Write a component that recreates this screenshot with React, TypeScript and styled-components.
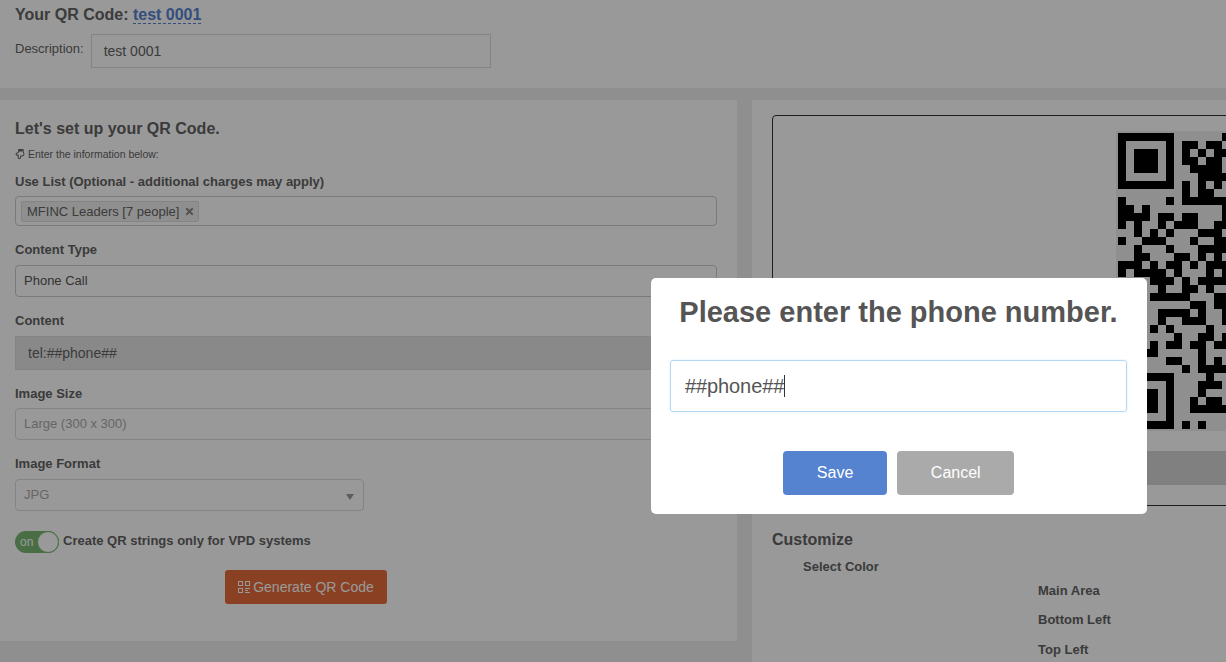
import React from "react";
import styled, { createGlobalStyle } from "styled-components";
import { FaRegHandPointDown, FaTimes } from "react-icons/fa";

const GlobalStyle = createGlobalStyle`
    html, body {
        margin: 0;
        padding: 0;
        height: 100%;
        overflow: hidden;
        background: #eeeeee;
    }
    body {
        font-family: "Liberation Sans", Arial, sans-serif;
        color: #636363;
    }
    * {
        box-sizing: border-box;
    }
`;

const Page = styled.div`
    width: 1226px;
    height: 662px;
    overflow: hidden;
    background: #eeeeee;
`;

const TopPanel = styled.section`
    height: 88px;
    padding: 6px 15px 0;
    background: #fff;
`;

const PageTitle = styled.h2`
    margin: 0 0 10px;
    font-size: 16px;
    line-height: 18px;
    font-weight: bold;
`;

const TitleLink = styled.a`
    color: #5583d0;
    border-bottom: 1px dashed #5583d0;
`;

const DescriptionRow = styled.div`
    display: flex;
    gap: 7px;
    align-items: flex-start;
`;

const DescriptionLabel = styled.label`
    font-size: 13px;
    line-height: 30px;
`;

const DescriptionInput = styled.div`
    width: 400px;
    height: 34px;
    padding: 0 12px;
    border: 1px solid #ddd;
    font-size: 14px;
    line-height: 32px;
`;

const Columns = styled.div`
    display: flex;
    gap: 15px;
    margin-top: 12px;
    width: 1800px;
`;

const FormPanel = styled.section`
    flex: none;
    width: 737px;
    height: 541px;
    padding: 19px 20px 0 15px;
    background: #fff;
`;

const FormTitle = styled.h3`
    margin: 0;
    font-size: 16px;
    line-height: 20px;
    font-weight: bold;
`;

const Hint = styled.p`
    display: flex;
    align-items: center;
    gap: 3px;
    margin: 8px 0 0;
    font-size: 10.5px;
    line-height: 14px;
`;

const FieldLabel = styled.label<{ $top?: number; $gap?: number }>`
    display: block;
    margin-top: ${({ $top }) => $top ?? 16}px;
    margin-bottom: ${({ $gap }) => $gap ?? 7}px;
    font-size: 13px;
    line-height: 16px;
    font-weight: bold;
`;

const TagBox = styled.div`
    display: flex;
    align-items: center;
    height: 30px;
    padding: 0 5px;
    border: 1px solid #ccc;
    border-radius: 4px;
`;

const Tag = styled.span`
    display: flex;
    align-items: center;
    gap: 5px;
    height: 21px;
    padding: 0 3px 0 5px;
    background: #eee;
    border: 1px solid #ddd;
    border-radius: 2px;
    font-size: 13px;
`;

const SelectBox = styled.div<{ $disabled?: boolean; $width?: number }>`
    position: relative;
    display: flex;
    align-items: center;
    width: ${({ $width }) => ($width ? `${$width}px` : "100%")};
    height: 32px;
    padding: 0 8px 2px;
    border: 1px solid ${({ $disabled }) => ($disabled ? "#ddd" : "#ccc")};
    border-radius: 4px;
    font-size: 13px;
    color: ${({ $disabled }) => ($disabled ? "#aaa" : "#555")};
`;

const SelectArrow = styled.span`
    position: absolute;
    right: 9px;
    top: 14px;
    border-style: solid;
    border-width: 6px 4px 0;
    border-color: #999 transparent transparent;
`;

const ReadOnlyInput = styled.div`
    height: 34px;
    padding: 0 12px;
    background: #e5e5e5;
    border: 1px solid #ddd;
    font-size: 14px;
    line-height: 32px;
`;

const SwitchRow = styled.div`
    display: flex;
    align-items: flex-start;
    gap: 4px;
    margin-top: 20px;
    font-size: 13px;
    line-height: 19px;
    font-weight: bold;
`;

const Switch = styled.span`
    position: relative;
    display: block;
    width: 44px;
    height: 22px;
    padding-left: 5px;
    background: #7ab872;
    border-radius: 11px;
    color: #fff;
    font-size: 12px;
    font-weight: normal;
    line-height: 23px;
`;

const SwitchKnob = styled.span`
    position: absolute;
    right: 0;
    top: 0;
    width: 22px;
    height: 22px;
    background: #fff;
    border: 1px solid #7ab872;
    border-radius: 50%;
`;

const GenerateRow = styled.div`
    display: flex;
    justify-content: center;
    margin-top: 17px;
    padding-right: 120px;
`;

const GenerateButton = styled.button`
    display: flex;
    align-items: center;
    gap: 3px;
    height: 34px;
    padding: 0 13px;
    background: #e66b3a;
    border: none;
    border-radius: 3px;
    color: #fff;
    font-family: inherit;
    font-size: 14px;
`;

const PreviewPanel = styled.section`
    flex: none;
    width: 1028px;
    height: 600px;
    padding: 15px 20px 0;
    background: #fff;
`;

const PreviewFrame = styled.div`
    display: flex;
    flex-direction: column;
    align-items: center;
    height: 391px;
    padding-top: 15px;
    border: 1px solid #333;
    border-radius: 4px;
`;

const QrImage = styled.svg`
    display: block;
    flex: none;
    width: 300px;
    height: 300px;
    background: #eee;
`;

const DownloadBar = styled.div`
    flex: none;
    width: 300px;
    height: 34px;
    margin-top: 20px;
    background: #d5d5d5;
`;

const CustomizeTitle = styled.h3`
    margin: 24px 0 0;
    font-size: 16px;
    line-height: 20px;
    font-weight: bold;
`;

const SelectColor = styled.div`
    margin: 9px 0 0 31px;
    font-size: 13px;
    line-height: 16px;
    font-weight: bold;
`;

const ColorList = styled.div`
    display: flex;
    flex-direction: column;
    gap: 13.4px;
    margin: 8px 0 0 266px;
    font-size: 13px;
    line-height: 16px;
    font-weight: bold;
`;

const Overlay = styled.div`
    position: fixed;
    inset: 0;
    padding: 278px 0 0 651px;
    background: rgba(0, 0, 0, 0.4);
`;

const Modal = styled.div`
    width: 496px;
    height: 236px;
    padding: 17px 20px 0 19px;
    background: #fff;
    border-radius: 5px;
`;

const ModalTitle = styled.h2`
    margin: 0;
    font-size: 29px;
    line-height: 34px;
    font-weight: bold;
    text-align: center;
    white-space: nowrap;
    color: #555;
`;

const ModalField = styled.div`
    display: flex;
    align-items: center;
    height: 52px;
    margin-top: 31px;
    padding: 0 14px;
    border: 1px solid #b3d9f5;
    border-radius: 3px;
    box-shadow: 0 0 2px rgba(120, 185, 235, 0.35);
    font-size: 20px;
    letter-spacing: -0.1px;
    color: #555;
`;

const Caret = styled.span`
    width: 1px;
    height: 22px;
    background: #333;
`;

const ModalActions = styled.div`
    display: flex;
    justify-content: center;
    gap: 10px;
    margin-top: 39px;
`;

const ModalButton = styled.button<{ $primary?: boolean }>`
    height: 44px;
    padding: 0 ${({ $primary }) => ($primary ? "34px" : "33.5px")};
    background: ${({ $primary }) => ($primary ? "#5583d0" : "#aaaaaa")};
    border: none;
    border-radius: 4px;
    color: #fff;
    font-family: inherit;
    font-size: 16px;
`;

// left part of the code, the rest of it is cut by the window edge
const qrRows = [
    "#######......#",
    "#.....#.##.##.",
    "#.###.#.#.#.##",
    "#.###.#.##.##.",
    "#.###.#..####.",
    "#.....#...####",
    "#######.#.#.#.",
    "........#.##..",
    "#.....#.######",
    "##.#.........#",
    "####.##.##...#",
    "#.#..#.###..##",
    "..#.#.#...###.",
    "#..###...#..##",
    "..#...#...####",
    "..##...##.#.#.",
    "###.#.##.#.###",
    "#.####.#...#.#",
    "....###.#.####",
    ".....#..##.#..",
    "....#####...##",
    ".........##.##",
    ".....####.#..#",
    ".....#..###..#",
    "....#.#....#..",
    ".......#..##.#",
    "....#.##.##.##",
    "...##.....#...",
    "......##..#.#.",
    "........#.####",
    "#######....#..",
    "#.....#...###.",
    "#.###.#...#...",
    "#.###.#..#.##.",
    "#.###.#..#####",
    "#.....#.......",
    "#######.#.#...",
];

const qrPath = qrRows
    .map((row, y) =>
        row
            .split("")
            .map((cell, x) => (cell === "#" ? `M${x} ${y}h1v1h-1z` : ""))
            .join("")
    )
    .join("");

const QrGlyph = () => (
    <svg width="12" height="12" viewBox="0 0 12 12" fill="none" stroke="currentColor" shapeRendering="crispEdges">
        <rect x="0.5" y="0.5" width="4" height="4" />
        <rect x="7.5" y="0.5" width="4" height="4" />
        <rect x="0.5" y="7.5" width="4" height="4" />
        <path d="M7 7.5h5M7 9.5h3M7 11.5h5" />
    </svg>
);

export default function App() {
    return (
        <Page>
            <GlobalStyle />
            <TopPanel>
                <PageTitle>
                    Your QR Code: <TitleLink>test 0001</TitleLink>
                </PageTitle>
                <DescriptionRow>
                    <DescriptionLabel>Description:</DescriptionLabel>
                    <DescriptionInput>test 0001</DescriptionInput>
                </DescriptionRow>
            </TopPanel>
            <Columns>
                <FormPanel>
                    <FormTitle>Let's set up your QR Code.</FormTitle>
                    <Hint>
                        <FaRegHandPointDown size={10} />
                        Enter the information below:
                    </Hint>
                    <FieldLabel $top={13} $gap={6}>
                        Use List (Optional - additional charges may apply)
                    </FieldLabel>
                    <TagBox>
                        <Tag>
                            MFINC Leaders [7 people]
                            <FaTimes size={11} color="#888" />
                        </Tag>
                    </TagBox>
                    <FieldLabel>Content Type</FieldLabel>
                    <SelectBox>Phone Call</SelectBox>
                    <FieldLabel>Content</FieldLabel>
                    <ReadOnlyInput>tel:##phone##</ReadOnlyInput>
                    <FieldLabel $gap={6}>Image Size</FieldLabel>
                    <SelectBox $disabled>Large (300 x 300)</SelectBox>
                    <FieldLabel>Image Format</FieldLabel>
                    <SelectBox $disabled $width={349}>
                        JPG
                        <SelectArrow />
                    </SelectBox>
                    <SwitchRow>
                        <Switch>
                            on
                            <SwitchKnob />
                        </Switch>
                        Create QR strings only for VPD systems
                    </SwitchRow>
                    <GenerateRow>
                        <GenerateButton>
                            <QrGlyph />
                            Generate QR Code
                        </GenerateButton>
                    </GenerateRow>
                </FormPanel>
                <PreviewPanel>
                    <PreviewFrame>
                        <QrImage viewBox="-0.25 -0.25 37.5 37.5">
                            <path d={qrPath} fill="#000" shapeRendering="crispEdges" />
                        </QrImage>
                        <DownloadBar />
                    </PreviewFrame>
                    <CustomizeTitle>Customize</CustomizeTitle>
                    <SelectColor>Select Color</SelectColor>
                    <ColorList>
                        <span>Main Area</span>
                        <span>Bottom Left</span>
                        <span>Top Left</span>
                    </ColorList>
                </PreviewPanel>
            </Columns>
            <Overlay>
                <Modal>
                    <ModalTitle>Please enter the phone number.</ModalTitle>
                    <ModalField>
                        ##phone##
                        <Caret />
                    </ModalField>
                    <ModalActions>
                        <ModalButton $primary>Save</ModalButton>
                        <ModalButton>Cancel</ModalButton>
                    </ModalActions>
                </Modal>
            </Overlay>
        </Page>
    );
}
